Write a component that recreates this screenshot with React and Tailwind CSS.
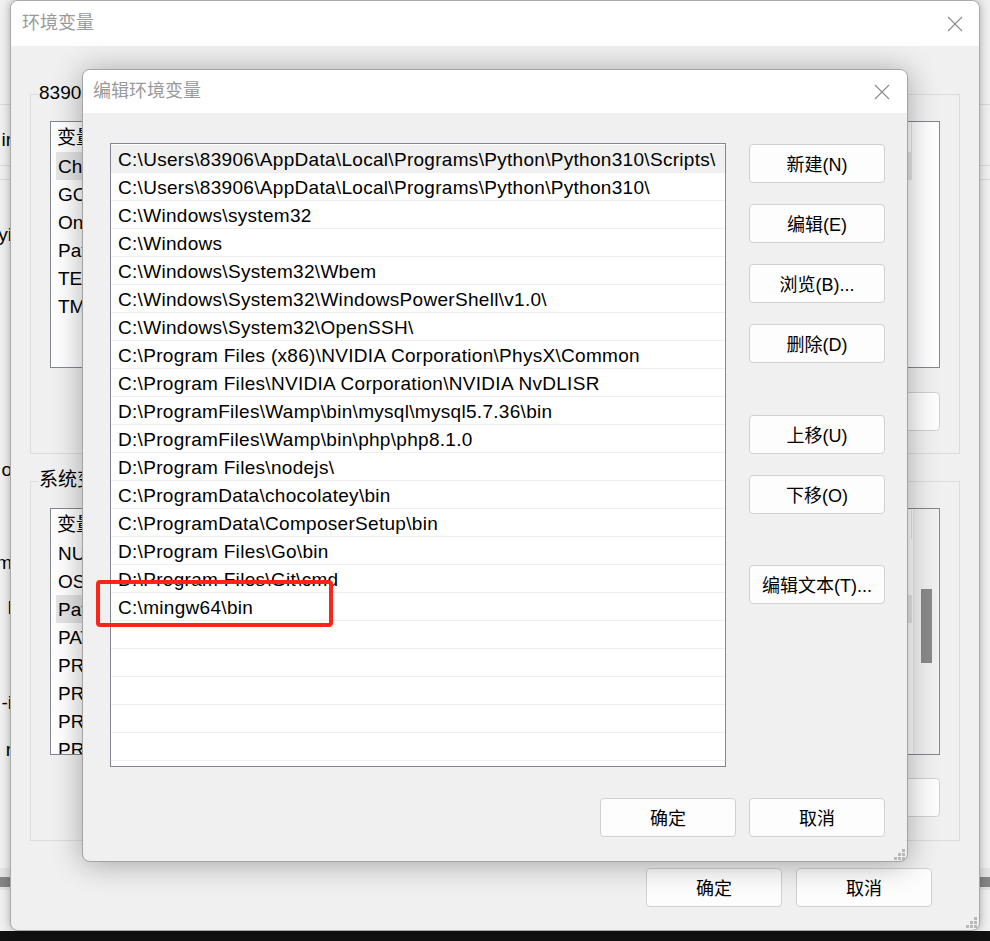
import React from 'react';

const paths = [
    'C:\\Users\\83906\\AppData\\Local\\Programs\\Python\\Python310\\Scripts\\',
    'C:\\Users\\83906\\AppData\\Local\\Programs\\Python\\Python310\\',
    'C:\\Windows\\system32',
    'C:\\Windows',
    'C:\\Windows\\System32\\Wbem',
    'C:\\Windows\\System32\\WindowsPowerShell\\v1.0\\',
    'C:\\Windows\\System32\\OpenSSH\\',
    'C:\\Program Files (x86)\\NVIDIA Corporation\\PhysX\\Common',
    'C:\\Program Files\\NVIDIA Corporation\\NVIDIA NvDLISR',
    'D:\\ProgramFiles\\Wamp\\bin\\mysql\\mysql5.7.36\\bin',
    'D:\\ProgramFiles\\Wamp\\bin\\php\\php8.1.0',
    'D:\\Program Files\\nodejs\\',
    'C:\\ProgramData\\chocolatey\\bin',
    'C:\\ProgramData\\ComposerSetup\\bin',
    'D:\\Program Files\\Go\\bin',
    'D:\\Program Files\\Git\\cmd',
    'C:\\mingw64\\bin',
];

const rows = [...paths, ...Array(6).fill('')];

const userVars = ['ChocolateyLastPathUpdate', 'GOPATH', 'OneDrive', 'Path', 'TEMP', 'TMP'];
const sysVars = ['NUMBER_OF_PROCESSORS', 'OS', 'Path', 'PATHEXT', 'PROCESSOR_ARCHITECTURE', 'PROCESSOR_IDENTIFIER', 'PROCESSOR_LEVEL', 'PROCESSOR_REVISION'];

const CloseX = () => (
    <svg width="16" height="16" viewBox="0 0 16 16" fill="none">
        <path d="M1 1L15 15M15 1L1 15" stroke="#8a8a8a" strokeWidth="1.1" />
    </svg>
);

const Grip = () => (
    <svg width="12" height="12" viewBox="0 0 12 12">
        {[[9, 1], [5, 5], [9, 5], [1, 9], [5, 9], [9, 9]].map(([x, y]) => (
            <rect key={`${x}-${y}`} x={x} y={y} width="3" height="3" fill="#b8b8b8" />
        ))}
    </svg>
);

const Btn = ({ children, className = '' }) => (
    <button className={`h-[39px] w-[136px] rounded-[4px] border border-[#d0d0d0] bg-[#fdfdfd] pt-[3px] text-[18px] text-black flex items-center justify-center ${className}`}>
        {children}
    </button>
);

const VarList = ({ items, selected, scroll }) => (
    <div className="h-[247px] border border-[#828790] bg-white overflow-hidden flex">
        <div className="flex-1 flex flex-col min-w-0">
            <div className="h-[30px] shrink-0">
                <div className="w-[861px] h-full border-r border-[#e5e5e5] pl-[6px] pt-[2px] flex items-center">变量</div>
            </div>
            {items.map((t, i) => (
                <div
                    key={t}
                    className={`h-7 shrink-0 ml-[5px] w-[856px] flex items-center pl-[2px] pt-[3px] whitespace-nowrap ${i === selected ? 'bg-[#e5e5e5]' : ''}`}
                >
                    {t}
                </div>
            ))}
        </div>
        {scroll && (
            <div className="w-[26px] shrink-0 bg-[#f0f0f0] border-l border-[#e6e6e6]">
                <div className="ml-[7px] mt-[80px] w-[11px] h-[74px] bg-[#8a8a8a]" />
            </div>
        )}
    </div>
);

const GroupBox = ({ label, children }) => (
    <div className="relative h-[360px] border border-[#dcdcdc] px-[19px]">
        <span className="absolute -top-[14px] left-[7px] bg-[#f0f0f0] px-px text-[19px] leading-[24px] text-black">{label}</span>
        {children}
    </div>
);

export default function App() {
    return (
        <div className="relative w-[990px] h-[941px] overflow-hidden bg-[#f0f0f0] font-['Liberation_Sans','Noto_Sans_CJK_SC',sans-serif] text-[19px] text-black">
            {/* background window */}
            <div className="absolute inset-0 flex flex-col">
                <div className="h-[104px] shrink-0" />
                <div className="h-px shrink-0 bg-[#dadada]" />
                <div className="h-[60px] shrink-0 pt-[21px]">
                    <div className="w-[12px] h-7 overflow-hidden flex items-center justify-end whitespace-nowrap">ir</div>
                </div>
                <div className="h-px shrink-0 bg-[#dadada]" />
                <div className="h-[13px] shrink-0" />
                <div className="h-px shrink-0 bg-[#dadada]" />
                <div className="flex-1 flex flex-col w-[12px] overflow-hidden items-end whitespace-nowrap">
                    <div className="h-[41px] shrink-0" />
                    <div className="h-7 flex items-center">yi</div>
                    <div className="h-[207px] shrink-0" />
                    <div className="h-7 flex items-center">o</div>
                    <div className="h-[65px] shrink-0" />
                    <div className="h-7 flex items-center">m</div>
                    <div className="h-[17px] shrink-0" />
                    <div className="h-7 flex items-center">l</div>
                    <div className="h-[67px] shrink-0" />
                    <div className="h-7 flex items-center">-i</div>
                    <div className="h-[19px] shrink-0" />
                    <div className="h-7 flex items-center">r</div>
                </div>
                <div className="h-[9px] shrink-0 bg-[#e4e4e4]" />
                <div className="h-[10px] shrink-0 bg-[#858585]" />
                <div className="h-[3px] shrink-0 bg-[#e4e4e4]" />
                <div className="h-[41px] shrink-0 bg-[#f0f0f0]" />
                <div className="h-[10px] shrink-0 bg-[#111111]" />
            </div>

            {/* 环境变量 window */}
            <div className="absolute left-[10px] top-0 w-[970px] h-[931px] rounded-lg border border-[#a9a9a9] bg-[#f0f0f0] overflow-hidden flex flex-col shadow-[0_0_10px_rgba(0,0,0,0.3)]">
                <div className="h-[45px] shrink-0 bg-white flex items-center justify-between pl-[11px] pr-[16px]">
                    <span className="text-[18px] text-[#9a9a9a]">环境变量</span>
                    <CloseX />
                </div>
                <div className="flex-1 relative px-[19px] flex flex-col">
                    <div className="mt-[48px]">
                        <GroupBox label="83906 的用户变量(U)">
                            <div className="pt-[26px]">
                                <VarList items={userVars} selected={0} />
                            </div>
                            <div className="mt-[24px] flex justify-end gap-[13px]">
                                <Btn className="w-[135px] h-[38px]">新建(W)...</Btn>
                                <Btn className="w-[135px] h-[38px]">编辑(I)...</Btn>
                                <Btn className="w-[135px] h-[38px]">删除(L)</Btn>
                            </div>
                        </GroupBox>
                    </div>
                    <div className="mt-[27px]">
                        <GroupBox label="系统变量(S)">
                            <div className="pt-[26px]">
                                <VarList items={sysVars} selected={2} scroll />
                            </div>
                            <div className="mt-[23px] flex justify-end gap-[13px]">
                                <Btn className="w-[135px]">新建(W)...</Btn>
                                <Btn className="w-[135px]">编辑(I)...</Btn>
                                <Btn className="w-[135px]">删除(L)</Btn>
                            </div>
                        </GroupBox>
                    </div>
                    <div className="mt-[27px] flex justify-end gap-[14px] pr-[28px]">
                        <Btn className="w-[135px] bg-[#f4f4f4]">确定</Btn>
                        <Btn className="w-[135px] bg-[#f4f4f4]">取消</Btn>
                    </div>
                    <div className="absolute right-[2px] bottom-[2px]">
                        <Grip />
                    </div>
                </div>
            </div>

            {/* 编辑环境变量 dialog */}
            <div className="absolute left-[82px] top-[69px] w-[826px] h-[793px] rounded-lg border border-[#a4a4a4] bg-[#f0f0f0] overflow-hidden flex flex-col shadow-[0_2px_30px_rgba(0,0,0,0.32)]">
                <div className="h-[43px] shrink-0 bg-white flex items-center justify-between pl-[10px] pr-[17px]">
                    <span className="text-[18px] text-[#9a9a9a]">编辑环境变量</span>
                    <CloseX />
                </div>
                <div className="flex-1 relative flex flex-col">
                    <div className="flex">
                        <div className="ml-[27px] mt-[30px] w-[616px] h-[624px] border border-[#828790] bg-white overflow-hidden pt-px">
                            {rows.map((p, i) => (
                                <div
                                    key={i}
                                    className={`h-7 border-b border-[#efefef] flex items-center pl-[7px] pt-[4px] whitespace-nowrap tracking-[0.3px] ${i === 0 ? 'bg-[#f0f0f0]' : ''}`}
                                >
                                    {p}
                                </div>
                            ))}
                        </div>
                        <div className="ml-[23px] mt-[31px] flex flex-col">
                            <Btn>新建(N)</Btn>
                            <Btn className="mt-[21px]">编辑(E)</Btn>
                            <Btn className="mt-[21px]">浏览(B)...</Btn>
                            <Btn className="mt-[21px]">删除(D)</Btn>
                            <Btn className="mt-[52px]">上移(U)</Btn>
                            <Btn className="mt-[21px]">下移(O)</Btn>
                            <Btn className="mt-[51px]">编辑文本(T)...</Btn>
                        </div>
                    </div>
                    <div className="mt-[31px] flex justify-end gap-[13px] pr-[22px]">
                        <Btn>确定</Btn>
                        <Btn>取消</Btn>
                    </div>
                    <div className="absolute right-[2px] bottom-[1px]">
                        <Grip />
                    </div>
                </div>
            </div>

            {/* red annotation */}
            <div className="absolute left-[96px] top-[580px] w-[237px] h-[47px] rounded-[4px] border-[4px] border-[#ff2419]" />
        </div>
    );
}
